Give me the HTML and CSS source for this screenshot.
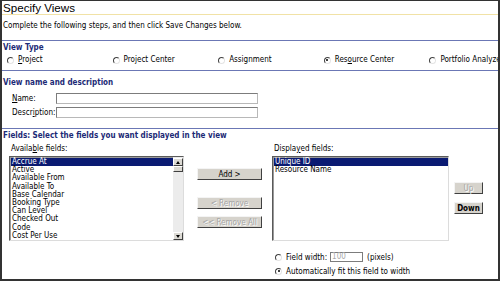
FILE: index.html
```html
<!DOCTYPE html>
<html>
<head>
<meta charset="utf-8">
<link rel="stylesheet" href="styles.css">
</head>
<body>
<div class="frame">
  <div class="title">Specify Views</div>
  <div class="intro">Complete the following steps, and then click Save Changes below.</div>

  <div class="sec sec-type">
    <div class="sec-h">View Type</div>
    <div class="radios">
      <label class="opt"><span class="radio"></span><span><u>P</u>roject</span></label>
      <label class="opt"><span class="radio"></span><span>Project Center</span></label>
      <label class="opt"><span class="radio"></span><span>Assignment</span></label>
      <label class="opt"><span class="radio checked"></span><span>Res<u>o</u>urce Center</span></label>
      <label class="opt"><span class="radio"></span><span>Portfolio Analyzer</span></label>
    </div>
  </div>

  <div class="sec sec-name">
    <div class="sec-h">View name and description</div>
    <div class="form-row first"><span class="flabel"><u>N</u>ame:</span><span class="text-input"></span></div>
    <div class="form-row"><span class="flabel">Descr<u>i</u>ption:</span><span class="text-input"></span></div>
  </div>

  <div class="sec sec-fields">
    <div class="sec-h">Fields: Select the fields you want displayed in the view</div>
    <div class="fields">
      <div class="col col-avail">
        <div class="clabel">Availa<u>b</u>le fields:</div>
        <div class="listbox avail">
          <div class="items">
            <div class="item sel">Accrue At</div>
            <div class="item">Active</div>
            <div class="item">Available From</div>
            <div class="item">Available To</div>
            <div class="item">Base Calendar</div>
            <div class="item">Booking Type</div>
            <div class="item">Can Level</div>
            <div class="item">Checked Out</div>
            <div class="item">Code</div>
            <div class="item">Cost Per Use</div>
          </div>
          <div class="scrollbar">
            <div class="sb-btn"><span class="arr up"></span></div>
            <div class="sb-thumb"></div>
            <div class="sb-track"></div>
            <div class="sb-btn"><span class="arr down"></span></div>
          </div>
        </div>
      </div>
      <div class="col col-btns">
        <div class="btn wide">Add &gt;</div>
        <div class="btn wide dis gap1">&lt; Remove</div>
        <div class="btn wide dis gap2">&lt;&lt; Remove All</div>
      </div>
      <div class="col col-disp">
        <div class="clabel">Displa<u>y</u>ed fields:</div>
        <div class="listbox disp">
          <div class="items">
            <div class="item sel">Unique ID</div>
            <div class="item">Resource Name</div>
          </div>
        </div>
        <div class="width-opts">
          <div class="wrow"><span class="radio"></span><span class="wl">Field width:</span><span class="num-input">100</span><span class="px">(pixels)</span></div>
          <div class="wrow"><span class="radio checked"></span><span class="wl">Automatically fit this field to width</span></div>
        </div>
      </div>
      <div class="col col-ud">
        <div class="btn small dis">Up</div>
        <div class="btn small down">Down</div>
      </div>
    </div>
  </div>
</div>
</body>
</html>
```

FILE: styles.css
```css
body {
  margin: 0;
  background: #fff;
}

.frame {
  width: 500px;
  height: 281px;
  box-sizing: border-box;
  border: 2px solid #333;
  border-top-width: 1px;
  overflow: hidden;
  background: #fff;
  font-family: "DejaVu Sans Condensed", "DejaVu Sans", Verdana, sans-serif;
  font-stretch: condensed;
  font-size: 8px;
  color: #000;
}

u { text-decoration: underline; }

.title {
  font-family: "Liberation Sans", Arial, sans-serif;
  font-stretch: normal;
  font-size: 11.6px;
  line-height: 13px;
  height: 13px;
  padding-left: 1px;
  border-bottom: 1px solid #f1e2a6;
}

.intro {
  padding: 5px 0 0 1px;
  line-height: 11px;
  height: 11px;
  margin-bottom: 9px;
  white-space: nowrap;
}

.sec {
  border-top: 1px solid #6b77b5;
}

.sec-h {
  font-weight: bold;
  color: #1c2a76;
  line-height: 12px;
  padding-left: 1px;
  white-space: nowrap;
}

/* view type */
.sec-type { padding-bottom: 4px; }
.sec-type .sec-h { margin-top: 1px; }

.radios {
  display: grid;
  grid-template-columns: repeat(5, 105.6px);
  padding-left: 5px;
  line-height: 12px;
  white-space: nowrap;
}

.opt {
  display: flex;
  align-items: center;
}

.radio {
  display: inline-block;
  width: 7px;
  height: 7px;
  box-sizing: border-box;
  border-radius: 50%;
  border: 1px solid;
  border-color: #404040 #e4e4e4 #e4e4e4 #404040;
  background: #fff;
  margin-right: 4px;
  position: relative;
  flex: none;
}

.radio.checked::after {
  content: "";
  position: absolute;
  left: 1.5px;
  top: 1.5px;
  width: 2px;
  height: 2px;
  border-radius: 50%;
  background: #000;
}

/* name & description */
.sec-name { padding-bottom: 10px; }
.sec-name .sec-h { margin-top: 6px; }

.form-row {
  display: flex;
  align-items: center;
  padding-left: 10px;
  margin-top: 3px;
}
.form-row.first { margin-top: 4px; }

.flabel {
  width: 44px;
  white-space: nowrap;
}

.text-input {
  width: 202px;
  height: 11px;
  box-sizing: border-box;
  border: 1px solid #7c7c7c;
  border-right-color: #b8b8b8;
  border-bottom-color: #b8b8b8;
  background: #fff;
}

/* fields */
.sec-fields .sec-h { margin-top: 1px; }

.fields {
  display: flex;
  padding-left: 7px;
  margin-top: 1px;
}

.col {
  display: flex;
  flex-direction: column;
}

.clabel {
  line-height: 12px;
  padding-left: 2px;
  margin-bottom: 1px;
  white-space: nowrap;
}

.listbox {
  height: 85px;
  box-sizing: border-box;
  border: 1px solid;
  border-color: #5a5a5a #dcdcdc #dcdcdc #5a5a5a;
  box-shadow: inset 1px 1px 0 #9a9a9a;
  background: #fff;
  display: flex;
  overflow: hidden;
}

.avail { width: 175px; }
.disp { width: 177px; }

.items {
  flex: 1;
  padding-top: 1px;
  padding-left: 1px;
  overflow: hidden;
}

.item {
  line-height: 8.2px;
  height: 8.2px;
  padding-left: 1px;
  white-space: nowrap;
}

.item.sel {
  background: #0a1a72;
  color: #fff;
}

.scrollbar {
  width: 10px;
  display: flex;
  flex-direction: column;
  background: #ececec;
  padding: 1px 0 0 0;
}

.sb-btn {
  height: 8px;
  background: #dcdad4;
  border: 1px solid;
  border-color: #fff #404040 #404040 #fff;
  box-sizing: border-box;
  display: flex;
  align-items: center;
  justify-content: center;
}

.sb-thumb {
  height: 6px;
  background: #dcdad4;
  border: 1px solid;
  border-color: #fff #404040 #404040 #fff;
  box-sizing: border-box;
}

.sb-track { flex: 1; }

.arr {
  width: 0;
  height: 0;
  border-left: 2.5px solid transparent;
  border-right: 2.5px solid transparent;
}
.arr.up { border-bottom: 3px solid #000; }
.arr.down { border-top: 3px solid #000; }

.col-btns {
  margin-left: 13px;
  padding-top: 25px;
}

.btn {
  height: 12px;
  box-sizing: border-box;
  background: #d6d3cc;
  border: 1px solid;
  border-color: #f4f4f4 #404040 #404040 #f4f4f4;
  display: flex;
  align-items: center;
  justify-content: center;
  white-space: nowrap;
}

.btn.wide { width: 65px; }
.btn.gap1 { margin-top: 17px; }
.btn.gap2 { margin-top: 7px; }

.btn.dis {
  color: #a6a6a6;
  text-shadow: 1px 1px 0 #fff;
}

.col-disp { margin-left: 10px; }

.col-ud {
  margin-left: 5px;
  padding-top: 39px;
}

.btn.small { width: 29px; }
.btn.down {
  margin-top: 8px;
  font-weight: bold;
}

.width-opts {
  margin-top: 9px;
  padding-left: 3px;
}

.wrow {
  display: flex;
  align-items: center;
  height: 14px;
  white-space: nowrap;
}

.wrow .radio { margin-right: 4px; }

.num-input {
  width: 33px;
  height: 10px;
  box-sizing: border-box;
  border: 1px solid #7c7c7c;
  color: #a8a8a8;
  line-height: 8px;
  padding-left: 1px;
  margin-left: 3px;
}

.px { margin-left: 4px; }
```
